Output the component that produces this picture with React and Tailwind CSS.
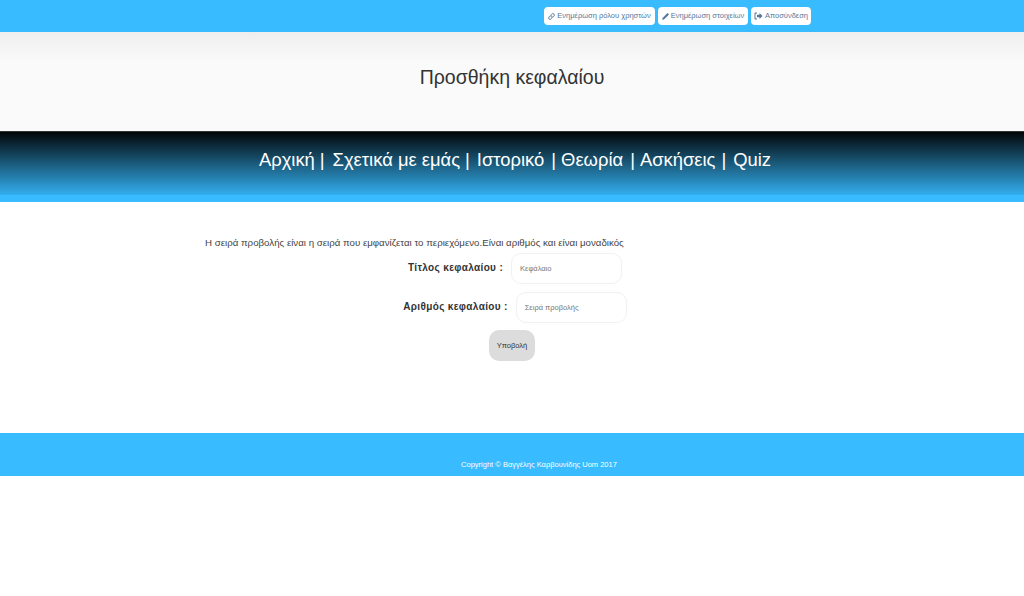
import React from "react";
import { Link, Pencil } from "lucide-react";

const navItems = [
  { label: "Αρχική", gap: "ml-[5px] mr-[8px]" },
  { label: "Σχετικά με εμάς", gap: "ml-[5px] mr-[7px]" },
  { label: "Ιστορικό", gap: "ml-[7px] mr-[5px]" },
  { label: "Θεωρία", gap: "ml-[7px] mr-[5px]" },
  { label: "Ασκήσεις", gap: "ml-[6px] mr-[7px]" },
  { label: "Quiz" },
];

function LogOutGlyph() {
  return (
    <svg width="9" height="8" viewBox="0 0 18 16" fill="currentColor">
      <path d="M6 1H2.5A1.5 1.5 0 0 0 1 2.5v11A1.5 1.5 0 0 0 2.5 15H6v-2H3V3h3z" />
      <path d="M11 2l6 6-6 6v-3.5H6v-5h5z" />
    </svg>
  );
}

function TopButton({ icon, label, width }) {
  return (
    <a className={`flex h-[18px] items-center justify-center gap-[2px] whitespace-nowrap rounded-[4px] bg-white text-[7.5px] text-[#557799] ${width}`}>
      {icon}
      {label}
    </a>
  );
}

function Field({ label, placeholder }) {
  return (
    <div className="flex items-center justify-center gap-2 pl-[6px]">
      <label className="pb-[2px] text-[10px] font-bold tracking-[0.35px] text-[#333]">{label}</label>
      <div className="flex h-[31px] w-[111px] items-center rounded-[10px] border border-[#f1f1f1] bg-white pl-2 text-[7.5px] text-[#777]">
        {placeholder}
      </div>
    </div>
  );
}

export default function App() {
  return (
    <div className="min-h-[596px] bg-white font-['Liberation_Sans',sans-serif]">
      {/* top bar */}
      <div className="flex h-8 items-center gap-[3px] bg-[#38bbff] pl-[544px]">
        <TopButton width="w-[111px]" label="Ενημέρωση ρόλου χρηστών" icon={<Link size={7} strokeWidth={3} />} />
        <TopButton width="w-[90px]" label="Ενημέρωση στοιχείων" icon={<Pencil size={7} fill="currentColor" />} />
        <TopButton width="w-[60px]" label="Αποσύνδεση" icon={<LogOutGlyph />} />
      </div>

      {/* title */}
      <div className="flex h-[99px] items-center justify-center bg-linear-to-b/srgb from-[#eeeeee] to-[#fafafa] to-[30%]">
        <h1 className="pb-[8px] text-[19.5px] font-normal text-[#333]">Προσθήκη κεφαλαίου</h1>
      </div>

      {/* nav */}
      <div className="h-[71px] border-b-[7px] border-t border-[#38bbff] border-t-[#333] bg-linear-to-b/srgb from-[#020608] to-[#33aeee]">
        <nav className="flex h-full items-center justify-center pb-[7px] pl-[6px] text-[18.4px] text-white">
          {navItems.map((item) => (
            <span key={item.label}>
              {item.label}
              {item.gap && <span className={item.gap}>|</span>}
            </span>
          ))}
        </nav>
      </div>

      {/* form */}
      <div className="h-[231px] pt-[34px]">
        <p className="pl-[205px] text-[9.7px] leading-[13px] text-[#444]">
          Η σειρά προβολής είναι η σειρά που εμφανίζεται το περιεχόμενο.Είναι αριθμός και είναι μοναδικός
        </p>
        <div className="mt-[4px] flex flex-col gap-2">
          <Field label="Τίτλος κεφαλαίου :" placeholder="Κεφάλαιο" />
          <Field label="Αριθμός κεφαλαίου :" placeholder="Σειρά προβολής" />
        </div>
        <div className="mt-[7px] flex justify-center">
          <button className="h-[31px] w-[46px] rounded-[10px] bg-[#dcdcdc] text-[7.5px] text-[#333]">Υποβολή</button>
        </div>
      </div>

      {/* footer */}
      <div className="flex h-[43px] items-end justify-center bg-[#38bbff] pb-[6px] pl-[54px] text-[7.5px] text-white">
        Copyright © Βαγγέλης Καρβουνίδης Uom 2017
      </div>
    </div>
  );
}
